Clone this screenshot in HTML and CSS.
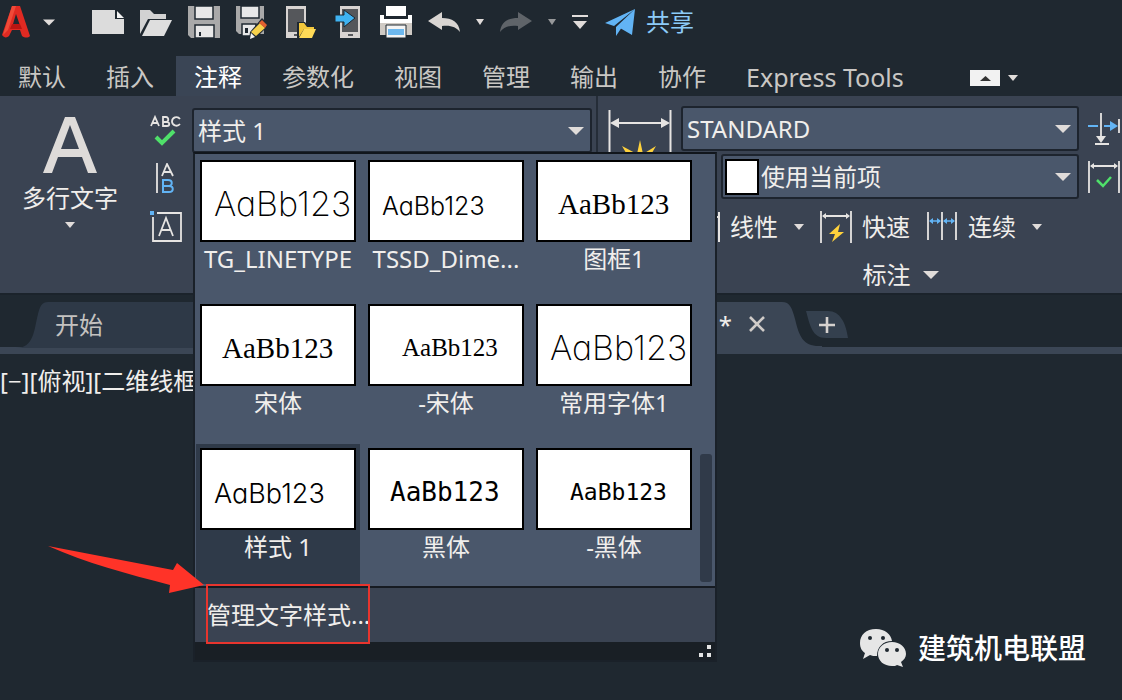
FILE: index.html
```html
<!DOCTYPE html>
<html lang="zh-CN">
<head>
<meta charset="utf-8">
<title>注释</title>
<link rel="stylesheet" href="styles.css">
</head>
<body>
<svg class="defs" aria-hidden="true">
  <symbol id="caret" viewBox="0 0 16 8"><path d="M0 0h16L8 8z"/></symbol>
</svg>

<header class="quick">
  <button class="app" aria-label="应用程序菜单">
    <svg width="32" height="34" viewBox="0 0 32 34"><path d="M12 1h8l10 30c-2 2-5 2-8 0l-2-6h-8l-3 6c-2 2-5 2-7-1z" fill="#e02a22"/><path d="M16 9l3.500 10h-6.500z" fill="#1f2830"/><path d="M12 1h4L8 25l-5 5z" fill="#f04a38"/><path d="M12 19l8 0 2 5H10z" fill="#b91512"/></svg>
    <svg class="caret" width="12" height="7"><use href="#caret"/></svg>
  </button>
  <button aria-label="新建"><svg width="32" height="34" viewBox="0 0 32 34"><path d="M0 5h23v9h9v15H0z" fill="#dcdcdc"/><path d="M25 6l7 7h-7z" fill="#f4f4f4"/></svg></button>
  <button aria-label="打开"><svg width="32" height="34" viewBox="0 0 32 34"><path d="M0 5h10l4 4h12v5H8L0 29z" fill="#d2d2d2"/><path d="M10 15h22l-8 16H2z" fill="#dedede"/></svg></button>
  <button aria-label="保存"><svg width="32" height="34" viewBox="0 0 32 34"><path d="M0 1h32v32H3l-3-3z" fill="#a9a9a9"/><path d="M7 1h18v13H7zM7 20h19v13H7z" fill="#e8e8e8" stroke="#1f2830" stroke-width="1.500"/><path d="M11 27h2v4h-2z" fill="#1f2830"/></svg></button>
  <button aria-label="另存为"><svg width="32" height="34" viewBox="0 0 32 34"><path d="M0 1h28v28H3l-3-3z" fill="#a9a9a9"/><path d="M5 1h18v12H5zM6 19h14v12H6z" fill="#e8e8e8" stroke="#1f2830" stroke-width="1.500"/><path d="M9 23h3v5H9z" fill="#1f2830"/><path d="M26 13l7 7-13 13-7 2 1-8z" fill="#1f2830"/><path d="M24 18l5 5-9 8-5-4z" fill="#f6d14b"/><path d="M26 15l5 5-2 3-6-5z" fill="#e2602f"/><path d="M15 28l4 4-5 2z" fill="#f3f3f3"/></svg></button>
  <button aria-label="从移动设备打开"><svg width="32" height="34" viewBox="0 0 32 34"><path d="M2 1h20v32H2z" fill="#d8d4d2"/><path d="M4 4h16v23H4z" fill="#55575b"/><path d="M10 29h4v2h-4z" fill="#55575b"/><path d="M13 17h8l2 3h8l2 4-5 11H13z" fill="#1f2830"/><path d="M15 18h5l3 4h7v2H20l-5 8z" fill="#f3c73c"/><path d="M20 24h12l-4 9H15z" fill="#ffdb57"/></svg></button>
  <button aria-label="保存到移动设备"><svg width="32" height="34" viewBox="0 0 32 34"><path d="M8 1h20v32H8z" fill="#d8d4d2"/><path d="M10 4h16v23H10z" fill="#55575b"/><path d="M16 29h5v2h-5z" fill="#55575b"/><path d="M3 10h9V5l11 8-11 9v-5H3z" fill="#3fb3f2" stroke="#1f2830"/></svg></button>
  <button aria-label="打印"><svg width="32" height="34" viewBox="0 0 32 34"><path d="M6 1h20v10H6z" fill="#fff"/><path d="M0 10h4v4h24v-4h4v8H0z" fill="#fff"/><path d="M0 18h32v12H0z" fill="#cfcac4"/><path d="M6 20h20v13H6z" fill="#f4f4f4" stroke="#1f2830"/><path d="M8 24h16v6H8z" fill="#6db8ee"/></svg></button>
  <button aria-label="放弃"><svg width="32" height="34" viewBox="0 0 32 34"><path d="M0 16L14 7v6c10 0 17 4 18 14-4-5-9-7-18-6v4z" fill="#d9d5d2"/></svg></button>
  <button aria-label="放弃列表"><svg class="caret" width="8" height="6" viewBox="0 0 16 8" preserveAspectRatio="none"><path d="M0 0h16L8 8z"/></svg></button>
  <button aria-label="重做"><svg width="32" height="34" viewBox="0 0 32 34"><path d="M32 16L18 7v6C8 13 1 17 0 27c4-5 9-7 18-6v4z" fill="#5f6469"/></svg></button>
  <button aria-label="重做列表"><svg class="dim" width="8" height="6" viewBox="0 0 16 8" preserveAspectRatio="none"><path d="M0 0h16L8 8z"/></svg></button>
  <button aria-label="自定义快速访问工具栏"><svg class="caret" width="16" height="14" viewBox="0 0 16 14"><path d="M0 0h16v2H0zM1 6h14l-7 8z"/></svg></button>
  <button class="share"><svg width="32" height="34" viewBox="0 0 32 34"><path d="M31 4L1 18l9 3zM31 4L12 22v9l4-6zM31 4L16 23l12 7z" fill="#62b4f5"/></svg><span>共享</span></button>
</header>

<nav class="tabs">
  <button>默认</button>
  <button>插入</button>
  <button class="on">注释</button>
  <button>参数化</button>
  <button>视图</button>
  <button>管理</button>
  <button>输出</button>
  <button>协作</button>
  <button class="latin">Express Tools</button>
  <button class="minimize" aria-label="最小化功能区"><svg width="30" height="16" viewBox="0 0 30 16"><path d="M0 0h30v16H0z" fill="#f2f2f2"/><path d="M10 11h11l-5.500-5z" fill="#333"/></svg><svg class="caret" width="10" height="6" viewBox="0 0 16 8" preserveAspectRatio="none"><path d="M0 0h16L8 8z"/></svg></button>
</nav>

<section class="ribbon">
  <div class="text-panel">
    <button class="mtext">
      <svg width="56" height="58" viewBox="0 0 56 58"><path d="M23 1h10l22 56h-9l-6-16H16l-6 16H1zM28 9l-9 24h18z" fill="#dedbd9" fill-rule="evenodd"/></svg>
      <span>多行文字</span>
      <svg class="caret" width="10" height="6" viewBox="0 0 16 8" preserveAspectRatio="none"><path d="M0 0h16L8 8z"/></svg>
    </button>
    <div class="tools">
      <button aria-label="拼写检查"><svg width="32" height="32" viewBox="0 0 32 32" fill="none"><path d="M1 11l4-9 4 9M2 8h6M13 2v9h4c3 0 3-4 0-4h-4 3c3 0 3-5 0-5zM30 4c-3-4-8-1-8 2.500s5 6 8 2.500" stroke="#e6e4e2" stroke-width="1.800"/><path d="M6 22l6 6L24 16" stroke="#4fe06a" stroke-width="4"/></svg></button>
      <button aria-label="对齐文字"><svg width="32" height="32" viewBox="0 0 32 32" fill="none"><path d="M7 0v30M12 13l5-12 6 12M14 9h7" stroke="#e6e4e2" stroke-width="1.800"/><path d="M13 17v12h6c5 0 5-6 0-6h-6 5c5 0 5-6 0-6z" stroke="#62b4f5" stroke-width="2"/></svg></button>
      <button aria-label="文字框"><svg width="32" height="32" viewBox="0 0 32 32" fill="none"><path d="M7 2h24v28H3V6M9 25l7-18 7 18M11 19h10" stroke="#e6e4e2" stroke-width="1.800"/><path d="M0 0h4v4H0z" fill="#62b4f5"/></svg></button>
    </div>
    <div class="combo">
      <select aria-label="文字样式"><option>样式 1</option></select>
      <svg class="caret" width="16" height="8"><use href="#caret"/></svg>
    </div>

    <div class="gallery">
      <div class="body">
        <div class="styles">
          <button><span class="thumb"><span class="stroke large">AaBb123</span></span>TG_LINETYPE</button>
          <button><span class="thumb"><span class="stroke small">AaBb123</span></span>TSSD_Dime...</button>
          <button><span class="thumb mid"><span class="song">AaBb123</span></span>图框1</button>
          <button><span class="thumb mid"><span class="song">AaBb123</span></span>宋体</button>
          <button><span class="thumb end"><span class="song narrow">AaBb123</span></span>-宋体</button>
          <button><span class="thumb"><span class="stroke large">AaBb123</span></span>常用字体1</button>
          <button class="on"><span class="thumb"><span class="stroke">AaBb123</span></span>样式 1</button>
          <button><span class="thumb mid"><span class="hei">AaBb123</span></span>黑体</button>
          <button><span class="thumb end"><span class="hei narrow">AaBb123</span></span>-黑体</button>
        </div>
        <div class="scroll"></div>
      </div>
      <button class="manage">管理文字样式...</button>
      <div class="grip"><svg width="12" height="12" viewBox="0 0 12 12"><path d="M8 0h4v4H8zM0 8h4v4H0zM8 8h4v4H8z" fill="#e4e4e4"/></svg></div>
    </div>
  </div>

  <div class="dim-panel">
    <button class="dim-big" aria-label="标注"><svg width="64" height="64" viewBox="0 0 64 64"><path d="M1.500 0v62M62.500 0v62M4 13h56" stroke="#e6e4e2" stroke-width="2"/><path d="M2 13l9-5v10zM62 13l-9-5v10z" fill="#e6e4e2"/><path d="M32 30l3 14 13-8-7 12 12 2-42 0 10-2-7-12 15 8z" fill="#ffd23c"/></svg></button>
    <div class="dim-main">
      <div class="combo">
        <select aria-label="标注样式"><option>STANDARD</option></select>
        <svg class="caret" width="16" height="8"><use href="#caret"/></svg>
      </div>
      <div class="combo layer">
        <span class="swatch"></span>
        <select aria-label="标注图层"><option>使用当前项</option></select>
        <svg class="caret" width="16" height="8"><use href="#caret"/></svg>
      </div>
      <div class="dims">
        <button><svg width="32" height="32" viewBox="0 0 32 32"><path d="M1 1v30M31 1v30M2 6h28" stroke="#e6e4e2" stroke-width="2"/></svg>线性</button>
        <button aria-label="线性列表"><svg class="caret" width="10" height="6" viewBox="0 0 16 8" preserveAspectRatio="none"><path d="M0 0h16L8 8z"/></svg></button>
        <button><svg width="32" height="32" viewBox="0 0 32 32"><path d="M1 0v32M31 0v32M3 5h26" stroke="#e6e4e2" stroke-width="1.800"/><path d="M2 5l4-3v6zM30 5l-4-3v6z" fill="#e6e4e2"/><path d="M20 13L9 23h6l-3 8 12-10h-6z" fill="#ffd23c"/></svg>快速</button>
        <button><svg width="32" height="32" viewBox="0 0 32 32"><path d="M2 1v28M16 1v28M30 1v28" stroke="#e6e4e2" stroke-width="1.800"/><path d="M4 10h10M18 10h10" stroke="#62b4f5" stroke-width="1.600"/><path d="M3 10l4-3v6zM15 10l-4-3v6zM17 10l4-3v6zM29 10l-4-3v6z" fill="#62b4f5"/></svg>连续</button>
        <button aria-label="连续列表"><svg class="caret" width="10" height="6" viewBox="0 0 16 8" preserveAspectRatio="none"><path d="M0 0h16L8 8z"/></svg></button>
      </div>
    </div>
    <div class="dim-side">
      <button aria-label="打断"><svg width="32" height="32" viewBox="0 0 32 32"><path d="M0 13h10M16 13h8" stroke="#62b4f5" stroke-width="2"/><path d="M22 8l8 5-8 5z" fill="#62b4f5"/><path d="M13 0v24M7 31h14M31 6v14" stroke="#e6e4e2" stroke-width="1.800"/><path d="M8 23h10l-5 7z" fill="#e6e4e2"/></svg></button>
      <button aria-label="更新"><svg width="32" height="32" viewBox="0 0 32 32"><path d="M1 0v32M31 0v32M3 5h26" stroke="#e6e4e2" stroke-width="1.800"/><path d="M2 5l4-3v6zM30 5l-4-3v6z" fill="#e6e4e2"/><path d="M9 19l6 6 8-9" stroke="#4fe06a" stroke-width="2.500" fill="none"/></svg></button>
    </div>
    <button class="title">标注<svg class="caret" width="16" height="8"><use href="#caret"/></svg></button>
  </div>
</section>

<div class="files">
  <button class="start"><svg width="48" height="46" viewBox="0 0 48 46"><path d="M0 46h16C34 46 34 28 38 12c2-8 4-12 10-12v46z" fill="#2e3947"/></svg><span>开始</span></button>
  <div class="active"><span>*</span><button aria-label="关闭"><svg width="18" height="18" viewBox="0 0 18 18"><path d="M2 1l14 14M16 1L2 15" stroke="#cfcbc8" stroke-width="2.600"/></svg></button></div>
  <svg class="edge" width="40" height="46" viewBox="0 0 40 46"><path d="M0 0c8 0 10 6 13 17 4 17 8 27 24 27h3v2H0z" fill="#3b4655"/></svg>
  <button class="plus" aria-label="新建图形"><svg width="42" height="28" viewBox="0 0 42 28"><path d="M0 0h22c12 0 18 12 20 27H20C6 27 4 14 0 0z" fill="#34404e"/><path d="M21 6v16M13 14h16" stroke="#d5d1ce" stroke-width="2.600"/></svg></button>
</div>

<main class="canvas"><p>[−][俯视][二维线框]</p></main>

<div class="mark"></div>
<svg class="arrow" width="156" height="48" viewBox="0 0 156 48"><path d="M0 0l125 24 4-7 27 22-35 8 1-8C80 28 38 17 0 0z" fill="#ff3328"/></svg>

<footer class="brand">
  <svg width="48" height="40" viewBox="0 0 48 40"><path d="M17 1C7 1 1 7 1 15c0 5 2 8 5 10l-2 6 7-4c2 1 4 1 7 1 0-9 6-15 15-15C32 6 26 1 17 1z" fill="#e6e6e6"/><path d="M33 14c-8 0-14 5-14 12s6 12 14 12c2 0 4 0 5-1l6 2-2-5c3-2 5-5 5-8 0-7-6-12-14-12z" fill="#e6e6e6"/><g fill="#1f2830"><circle cx="11" cy="10" r="2"/><circle cx="24" cy="10" r="2"/><circle cx="28" cy="22" r="2"/><circle cx="38" cy="22" r="2"/></g></svg>
  <span>建筑机电联盟</span>
</footer>
</body>
</html>
```

FILE: styles.css
```css
* { box-sizing: border-box; }

body {
  margin: 0;
  min-height: 100vh;
  position: relative;
  overflow: hidden;
  display: flex;
  flex-direction: column;
  background: #1f2830;
  color: #f0eeec;
  font: 400 24px/32px "Noto Sans", "Noto Sans CJK SC", sans-serif;
}

button, select {
  margin: 0;
  padding: 0;
  border: 0;
  background: none;
  color: inherit;
  font: inherit;
}

svg { display: block; flex: none; }
.defs { position: absolute; width: 0; height: 0; }
.caret { fill: #e0dcda; }
.dim { fill: #96989a; }

.quick {
  display: flex;
  align-items: center;
  gap: 16px;
  height: 44px;
}
.quick .app {
  display: flex;
  align-items: center;
  gap: 11px;
  padding-right: 21px;
}
.share {
  display: flex;
  align-items: center;
  gap: 10px;
  color: #8ccbf8;
}

.tabs {
  display: flex;
  gap: 4px;
  height: 52px;
  padding-top: 12px;
  color: #c9c7c4;
}
.tabs button { padding: 2px 18px 0; white-space: nowrap; }
.tabs .on { background: #3a4555; color: #fff; }
.tabs .latin { font-size: 25px; }
.tabs .minimize {
  display: flex;
  align-items: center;
  gap: 8px;
  padding: 4px 0 0 44px;
}

.ribbon {
  display: flex;
  height: 199px;
  background: #3a4352;
  border-bottom: 2px solid #1b232b;
}
.text-panel {
  position: relative;
  display: flex;
  align-items: flex-start;
  flex: none;
  width: 598px;
  padding: 12px 4px 0 0;
  border-right: 2px solid #252d38;
}
.mtext {
  display: flex;
  flex-direction: column;
  align-items: center;
  gap: 8px;
  width: 140px;
  padding-top: 8px;
}
.tools {
  display: grid;
  gap: 16px;
  width: 52px;
  padding: 7px 10px 0;
}
.combo {
  display: flex;
  align-items: center;
  flex: 1;
  height: 45px;
  padding: 0 6px 0 4px;
  border: 2px solid #1d242e;
  border-radius: 3px;
  background: #4a576b;
}
.combo select {
  appearance: none;
  flex: 1;
  min-width: 0;
  height: 36px;
}

.gallery {
  position: absolute;
  z-index: 2;
  top: 56px;
  left: 193px;
  width: 524px;
  border: 2px solid #1a2129;
  border-top-color: #11161c;
  background: #4a576b;
}
.body {
  display: flex;
  align-items: flex-end;
  justify-content: space-between;
  padding: 2px 3px 2px 1px;
  border-bottom: 2px solid #161b22;
}
.styles {
  display: grid;
  grid-template-columns: repeat(3, 164px);
  gap: 4px;
}
.styles button {
  display: flex;
  flex-direction: column;
  align-items: center;
  height: 140px;
  padding: 4px;
  line-height: 34px;
}
.styles .on { background: #2f3a49; }
.thumb {
  display: flex;
  align-items: center;
  flex: none;
  width: 156px;
  height: 82px;
  padding: 6px 0 0 12px;
  border: 2px solid #000;
  background: #fff;
  color: #000;
}
.styles .on .thumb { padding-top: 10px; }
.thumb.mid { padding-left: 20px; }
.thumb.end { padding-left: 32px; }
.stroke {
  font: 300 27px/40px Inter, sans-serif;
  font-feature-settings: "cv11";
}
.stroke.large { font-size: 34px; font-weight: 200; }
.stroke.small { padding-top: 4px; font-size: 25px; }
.song { font: 400 29px/40px "Liberation Serif", serif; }
.song.narrow { font-size: 25px; }
.hei { font: 400 26px/40px "DejaVu Sans Mono", monospace; }
.hei.narrow { font-size: 23px; }
.scroll {
  width: 12px;
  height: 128px;
  margin-bottom: 2px;
  border-radius: 3px;
  background: #303a49;
}
.manage {
  display: block;
  width: 100%;
  height: 54px;
  padding-left: 12px;
  background: #3a4352;
  text-align: left;
}
.grip {
  display: flex;
  align-items: center;
  justify-content: flex-end;
  height: 18px;
  padding-right: 4px;
  background: #191f25;
}

.dim-panel {
  flex: 1;
  display: grid;
  grid-template-columns: 64px 1fr 32px;
  grid-template-rows: 140px 1fr;
  column-gap: 9px;
  padding: 10px 2px 0 10px;
}
.dim-big { align-self: start; padding-top: 4px; }
.dim-main { display: flex; flex-direction: column; gap: 3px; }
.dim-main .combo { flex: none; }
.dim-main .layer { margin-left: 40px; padding-left: 2px; }
.swatch {
  width: 34px;
  height: 36px;
  margin-right: 2px;
  border: 2px solid #000;
  background: #fff;
}
.dims {
  display: flex;
  align-items: center;
  gap: 16px;
  padding: 9px 0 0 7px;
}
.dims button { display: flex; align-items: center; gap: 10px; white-space: nowrap; }
.dim-side {
  display: grid;
  align-content: start;
  gap: 16px;
  padding-top: 7px;
}
.title {
  grid-column: 2 / 4;
  display: flex;
  align-items: center;
  justify-content: center;
  gap: 12px;
  padding-top: 10px;
}

.files {
  display: flex;
  height: 59px;
  padding-top: 7px;
  border-bottom: 7px solid #3b4655;
}
.start { display: flex; flex: none; width: 400px; color: #c4c2c0; text-align: left; }
.start span { flex: 1; height: 46px; padding-left: 7px; line-height: 46px; background: #2e3947; }
.active {
  display: flex;
  gap: 16px;
  justify-content: flex-end;
  align-items: center;
  width: 382px;
  padding-right: 16px;
  background: #3b4655;
}
.edge { margin-right: -16px; }
.plus { align-self: flex-start; padding-top: 9px; }

.canvas { flex: 1; }
.canvas p { margin: 0; padding-top: 11px; white-space: nowrap; }

.mark {
  position: absolute;
  z-index: 3;
  left: 206px;
  top: 584px;
  width: 164px;
  height: 60px;
  border: 2px solid #e8352e;
}
.arrow { position: absolute; z-index: 3; left: 48px; top: 546px; }
.brand {
  position: absolute;
  right: 36px;
  bottom: 32px;
  display: flex;
  align-items: center;
  gap: 11px;
  color: #fff;
  font-size: 28px;
  font-weight: 500;
}
```
